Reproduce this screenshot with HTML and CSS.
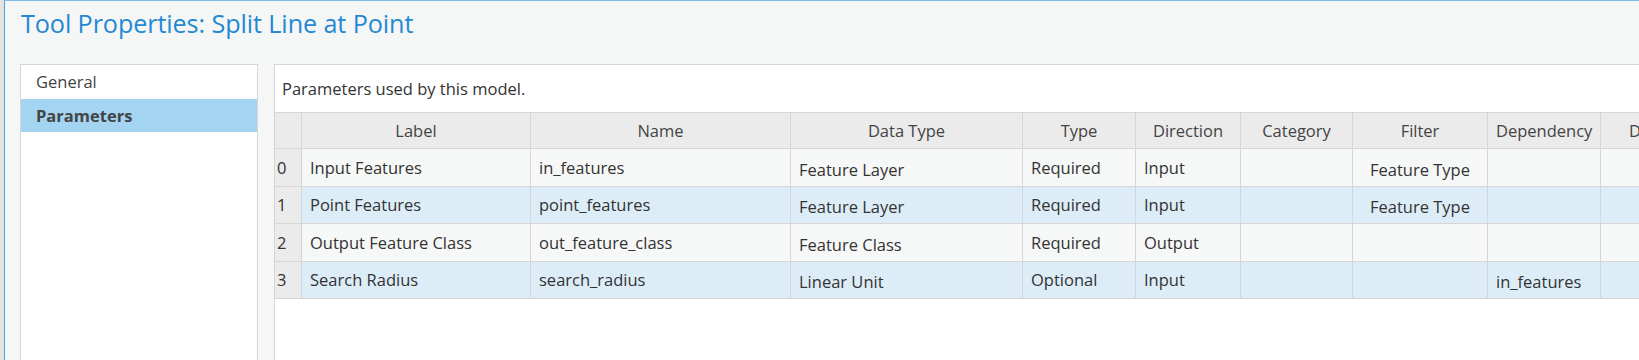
FILE: index.html
```html
<!DOCTYPE html>
<html lang="en">
<head>
    <meta charset="UTF-8">
    <title>Tool Properties: Split Line at Point</title>
    <link rel="stylesheet" href="styles.css">
</head>
<body>
    <div class="window">
        <h1 class="title">Tool Properties: Split Line at Point</h1>
        <div class="content">
            <ul class="nav">
                <li>General</li>
                <li class="active">Parameters</li>
            </ul>
            <div class="panel">
                <p class="desc">Parameters used by this model.</p>
                <table class="params">
                    <colgroup>
                        <col style="width: 27px">
                        <col style="width: 229px">
                        <col style="width: 260px">
                        <col style="width: 232px">
                        <col style="width: 113px">
                        <col style="width: 105px">
                        <col style="width: 112px">
                        <col style="width: 135px">
                        <col style="width: 113px">
                        <col style="width: 113px">
                        <col style="width: 120px">
                    </colgroup>
                    <thead>
                        <tr>
                            <th></th>
                            <th>Label</th>
                            <th>Name</th>
                            <th>Data Type</th>
                            <th>Type</th>
                            <th>Direction</th>
                            <th>Category</th>
                            <th>Filter</th>
                            <th>Dependency</th>
                            <th>Default</th>
                            <th>Environment</th>
                        </tr>
                    </thead>
                    <tbody>
                        <tr>
                            <td class="idx">0</td>
                            <td>Input Features</td>
                            <td>in_features</td>
                            <td class="combo">Feature Layer</td>
                            <td>Required</td>
                            <td>Input</td>
                            <td></td>
                            <td class="combo center">Feature Type</td>
                            <td></td>
                            <td></td>
                            <td></td>
                        </tr>
                        <tr class="alt">
                            <td class="idx">1</td>
                            <td>Point Features</td>
                            <td>point_features</td>
                            <td class="combo">Feature Layer</td>
                            <td>Required</td>
                            <td>Input</td>
                            <td></td>
                            <td class="combo center">Feature Type</td>
                            <td></td>
                            <td></td>
                            <td></td>
                        </tr>
                        <tr>
                            <td class="idx">2</td>
                            <td>Output Feature Class</td>
                            <td>out_feature_class</td>
                            <td class="combo">Feature Class</td>
                            <td>Required</td>
                            <td>Output</td>
                            <td></td>
                            <td></td>
                            <td></td>
                            <td></td>
                            <td></td>
                        </tr>
                        <tr class="alt">
                            <td class="idx">3</td>
                            <td>Search Radius</td>
                            <td>search_radius</td>
                            <td class="combo">Linear Unit</td>
                            <td>Optional</td>
                            <td>Input</td>
                            <td></td>
                            <td></td>
                            <td class="combo">in_features</td>
                            <td></td>
                            <td></td>
                        </tr>
                    </tbody>
                </table>
            </div>
        </div>
    </div>
</body>
</html>
```

FILE: styles.css
```css
body {
    margin: 0;
    height: 360px;
    overflow: hidden;
    background-color: #e4e4e4;
    font-family: 'Open Sans', 'Noto Sans', sans-serif;
    color: #333;
}
.window {
    margin-left: 4px;
    height: 360px;
    background-color: #f5f7f7;
    border-left: 1px solid #4da0dc;
    border-top: 1px solid #7fbde6;
    box-sizing: border-box;
}
.title {
    margin: 0;
    padding: 5px 0 0 16px;
    height: 58px;
    font-size: 25.2px;
    font-weight: 400;
    color: #2488d2;
    letter-spacing: -0.1px;
}
.content {
    display: flex;
    gap: 16px;
    padding-left: 15px;
    height: 296px;
}
.nav {
    list-style: none;
    margin: 0;
    padding: 0;
    width: 238px;
    flex: none;
    background-color: #fff;
    border: 1px solid #d6d6d6;
    border-bottom: none;
    box-sizing: border-box;
}
.nav li {
    padding: 0 0 0 15px;
    height: 34px;
    line-height: 34px;
    font-size: 16.5px;
    color: #444;
}
.nav li.active {
    height: 33px;
    line-height: 33px;
    background-color: #a3d4f1;
    font-weight: 700;
}
.panel {
    flex: none;
    width: 1800px;
    background-color: #fff;
    border: 1px solid #d6d6d6;
    border-bottom: none;
}
.desc {
    margin: 0;
    height: 47px;
    line-height: 47px;
    padding-left: 7px;
    font-size: 16.5px;
    color: #333;
}
.params {
    width: 1559px;
    border-collapse: collapse;
    table-layout: fixed;
    font-size: 16.5px;
    margin-left: -1px;
}
.params th,
.params td {
    border: 1px solid #d6d6d6;
    padding: 0 8px;
    white-space: nowrap;
    overflow: hidden;
    text-align: left;
}
.params th {
    height: 35px;
    background-color: #ebebeb;
    font-weight: 400;
    text-align: center;
    color: #444;
}
.params td {
    height: 36.5px;
    background-color: #f6f7f7;
}
.params tr.alt td {
    background-color: #ddedf8;
}
.params td.idx,
.params tr.alt td.idx {
    background-color: #ebebeb;
    padding: 0 2px;
}
.params td.combo {
    height: 32.5px;
    padding-top: 4px;
}
.params td.center {
    text-align: center;
}
```
